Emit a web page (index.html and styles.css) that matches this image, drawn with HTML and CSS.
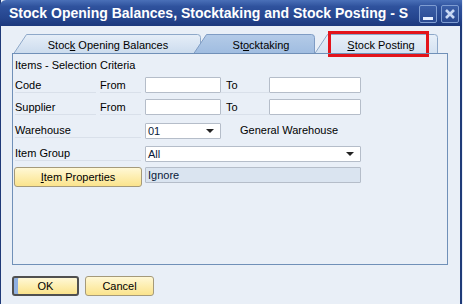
FILE: index.html
```html
<!DOCTYPE html>
<html>
<head>
<meta charset="utf-8">
<link rel="stylesheet" href="styles.css">
</head>
<body>
<div class="window">
  <div class="titlebar">
    <span class="title">Stock Opening Balances, Stocktaking and Stock Posting - S</span>
    <div class="winbtns">
      <span class="winbtn"><svg width="18" height="18" viewBox="0 0 18 18"><rect x="4" y="12" width="10" height="3" fill="#e8f0ff"/></svg></span>
      <span class="winbtn"><svg width="18" height="18" viewBox="0 0 18 18"><path d="M5 5 L13 13 M13 5 L5 13" stroke="#c8d8f4" stroke-width="2.6"/></svg></span>
    </div>
  </div>
  <div class="content">
    <div class="tabs">
      <div class="tab t1">
        <svg class="tabshape" width="188" height="20" viewBox="0 0 188 20"><defs><linearGradient id="g1" x1="0" y1="0" x2="0" y2="1"><stop offset="0" stop-color="#e6eef8"/><stop offset="1" stop-color="#cbdbed"/></linearGradient></defs><path d="M0.5 20 L13.5 0.5 L184.5 0.5 Q187.5 0.5 187.5 3.5 L187.5 20" fill="url(#g1)" stroke="#8ea8c9"/></svg>
        <span class="tablabel">Stoc<u>k</u> Opening Balances</span>
      </div>
      <div class="tab t2">
        <svg class="tabshape" width="122" height="20" viewBox="0 0 122 20"><defs><linearGradient id="g2" x1="0" y1="0" x2="0" y2="1"><stop offset="0" stop-color="#b4cbe8"/><stop offset="1" stop-color="#9fbce0"/></linearGradient></defs><path d="M0.5 20 L13.5 0.5 L118.5 0.5 Q121.5 0.5 121.5 3.5 L121.5 20" fill="url(#g2)" stroke="#7f9cc4"/></svg>
        <span class="tablabel">St<u>o</u>cktaking</span>
      </div>
      <div class="tab t3">
        <svg class="tabshape" width="124" height="20" viewBox="0 0 124 20"><defs><linearGradient id="g3" x1="0" y1="0" x2="0" y2="1"><stop offset="0" stop-color="#e8f0f9"/><stop offset="1" stop-color="#d3e1f1"/></linearGradient></defs><path d="M0.5 20 L13.5 0.5 L120.5 0.5 Q123.5 0.5 123.5 3.5 L123.5 20" fill="url(#g3)" stroke="#8ea8c9"/></svg>
        <span class="tablabel"><u>S</u>tock Posting</span>
      </div>
      <div class="highlight"></div>
    </div>
    <div class="panel">
      <div class="heading">Items - Selection Criteria</div>
      <div class="grid">
        <span class="lbl">Code</span>
        <span class="lbl">From</span>
        <span class="field"></span>
        <span class="lbl to">To</span>
        <span class="field"></span>

        <span class="lbl">Supplier</span>
        <span class="lbl">From</span>
        <span class="field"></span>
        <span class="lbl to">To</span>
        <span class="field"></span>

        <span class="lbl span2">Warehouse</span>
        <span class="field select">01<i class="arrow"></i></span>
        <span class="plain span2">General Warehouse</span>

        <span class="lbl span2">Item Group</span>
        <span class="field select span3">All<i class="arrow"></i></span>

        <span class="btn propbtn span2"><u>I</u>tem Properties</span>
        <span class="field ro span3">Ignore</span>
      </div>
    </div>
    <div class="footer">
      <span class="btn okbtn">OK</span>
      <span class="btn cancelbtn">Cancel</span>
    </div>
  </div>
</div>
</body>
</html>
```
FILE: styles.css
```css
html, body {
  margin: 0;
  padding: 0;
}
body {
  width: 463px;
  height: 304px;
  overflow: hidden;
  background: #e9eff7;
  font-family: "Liberation Sans", Arial, sans-serif;
  font-size: 11px;
  color: #000;
}
.window {
  width: 459px;
  height: 304px;
  border-left: 1px solid #1f3a78;
  border-right: 2px solid #1f3a78;
  background: #e9eff7;
  box-sizing: content-box;
}
.titlebar {
  height: 26px;
  margin-left: -1px;
  margin-right: -2px;
  border-top-left-radius: 6px;
  background: linear-gradient(#4a70b8 0, #2f529d 25%, #25458e 70%, #1c387c 100%);
  display: flex;
  align-items: center;
  justify-content: space-between;
  padding-left: 9px;
  padding-right: 3px;
  overflow: hidden;
}
.title {
  color: #fff;
  font-weight: bold;
  font-size: 14px;
  white-space: nowrap;
}
.winbtns {
  display: flex;
  gap: 4px;
  margin-top: 1px;
}
.winbtn {
  width: 18px;
  height: 18px;
  box-sizing: border-box;
  border: 1px solid #7f9dd2;
  border-radius: 2px;
  background: linear-gradient(#3b5fa8, #2a4a92);
  display: flex;
  align-items: center;
  justify-content: center;
}
.winbtn svg {
  margin: -1px;
}
.content {
  padding-top: 8px;
}
.tabs {
  position: relative;
  display: flex;
  height: 20px;
  padding-left: 12px;
  margin-bottom: -1px;
}
.tab {
  position: relative;
  height: 20px;
  display: flex;
  align-items: center;
  justify-content: center;
  padding-left: 14px;
  box-sizing: border-box;
  line-height: 20px;
}
.tabshape {
  position: absolute;
  left: 0;
  top: 0;
}
.tablabel {
  position: relative;
  font-size: 11px;
  padding-top: 1px;
}
.t1 { width: 188px; padding-right: 12px; }
.t2 { width: 122px; margin-left: -8px; }
.t3 { width: 124px; margin-left: -1px; padding-right: 4px; }
.highlight {
  position: absolute;
  left: 327px;
  top: -3px;
  width: 101px;
  height: 26px;
  box-sizing: border-box;
  border: 3px solid #e3141b;
}
.panel {
  margin-left: 11px;
  width: 436px;
  height: 212px;
  box-sizing: border-box;
  border: 1px solid #7090b8;
  padding-left: 2px;
  position: relative;
}
.heading {
  margin-top: 4px;
  line-height: 14px;
  height: 14px;
}
.grid {
  margin-top: 5px;
  display: grid;
  grid-template-columns: 85px 45px 76px 48px 92px;
  grid-template-rows: 22px 23px 23px 22px 20px;
  align-items: start;
}
.lbl {
  height: 16px;
  line-height: 16px;
  border-bottom: 1px solid #d9e0ea;
  box-sizing: border-box;
  margin-right: 4px;
  white-space: nowrap;
}
.lbl.to {
  padding-left: 5px;
  margin-right: 0;
}
.plain {
  height: 16px;
  line-height: 16px;
  padding-left: 19px;
  white-space: nowrap;
}
.span2 { grid-column: span 2; }
.span3 { grid-column: span 3; }
.field {
  height: 16px;
  box-sizing: border-box;
  background: #fff;
  border: 1px solid #b5bdc9;
  border-radius: 1px;
  line-height: 14px;
  padding-left: 2px;
  position: relative;
  color: #0a1a3a;
}
.field.select {
  margin-top: 1px;
}
.arrow {
  position: absolute;
  right: 6px;
  top: 5px;
  width: 0;
  height: 0;
  border-left: 4px solid transparent;
  border-right: 4px solid transparent;
  border-top: 4px solid #222;
}
.field.ro {
  background: #dae4f0;
}
.btn {
  display: flex;
  align-items: center;
  justify-content: center;
  box-sizing: border-box;
  height: 20px;
  border: 1px solid #a59a7a;
  border-radius: 3px;
  background: linear-gradient(#fff8d6 0, #fdeeb0 50%, #fbe38c 100%);
  color: #000;
}
.propbtn {
  margin-left: -1px;
  width: 128px;
}
.footer {
  display: flex;
  gap: 6px;
  padding-left: 11px;
  margin-top: 11px;
}
.okbtn {
  width: 67px;
  border: 2px solid #505050;
  box-shadow: inset 4px 0 0 #8fb0e2;
}
.cancelbtn {
  width: 69px;
}
```
